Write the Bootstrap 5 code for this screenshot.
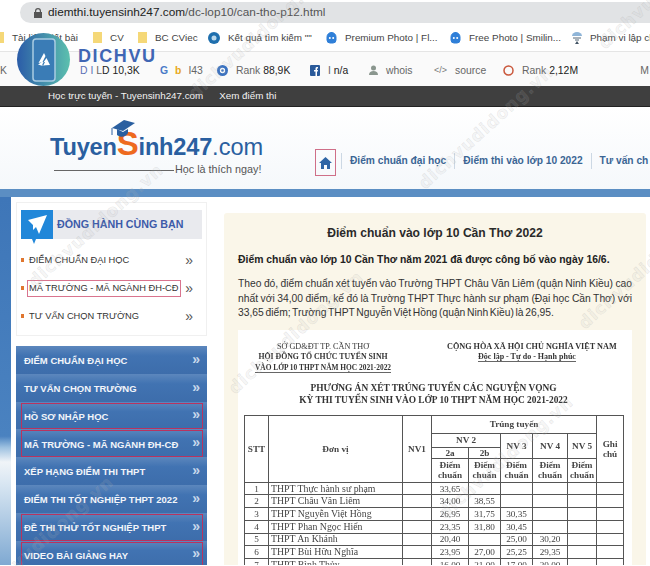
<!DOCTYPE html>
<html lang="vi">
<head>
  <meta charset="UTF-8">
  <title>Điểm chuẩn vào lớp 10 Cần Thơ 2022</title>
  <meta name="viewport" content="width=device-width, initial-scale=1">
  <link href="https://cdn.jsdelivr.net/npm/bootstrap@5.3.0/dist/css/bootstrap.min.css" rel="stylesheet">
  <style>
    html, body { height: 566px; overflow: hidden; }
    body { width: 650px; position: relative; background: #fff; color: #222; font-family: "Liberation Sans", sans-serif; font-size: 11px; }
    .addr-row { height: 24px; padding: 2px 0 1px 20px; }
    .addr-pill { height: 21px; background: #e1e3e5; border-radius: 11px 0 0 11px; padding-left: 14px; gap: 6px; font-size: 11.8px; color: #555; white-space: nowrap; overflow: hidden; }
    .addr-pill b { font-weight: 400; color: #222; }
    .book-row { height: 28px; padding-top: 1px; border-bottom: 1px solid #e5e5e5; font-size: 9.9px; color: #444; white-space: nowrap; overflow: hidden; }
    .bm { flex: none; display: flex; align-items: center; gap: 8px; }
    .fold { width: 9px; height: 11px; background: #f5d878; display: block; flex: none; }
    .ext-row { height: 34px; padding-top: 3px; background: #fafafa; font-size: 10.4px; color: #666; white-space: nowrap; overflow: hidden; }
    .ext-row b { font-weight: 400; color: #222; }
    .ext { flex: none; display: flex; align-items: center; gap: 8px; }
    .dark-bar { height: 21px; background: #3f3f3f; color: #f2f2f2; font-size: 9.8px; padding-left: 48px; gap: 16px; border-bottom: 1px solid #222; }
    .site-head { height: 82px; background: linear-gradient(#fff, #f5f8fb); overflow: hidden; }
    .logo-box { width: 265px; margin-left: 50px; padding-top: 27px; flex: none; position: relative; }
    .logo-txt { font-size: 23.6px; line-height: 27px; font-weight: 700; color: #2a5fa0; letter-spacing: -.2px; white-space: nowrap; }
    .logo-txt i { font-style: normal; color: #ee6a1f; font-size: 33px; line-height: 20px; }
    .logo-txt em { font-style: normal; font-weight: 400; color: #2a5fa0; letter-spacing: 0; }
    .logo-cap { position: absolute; left: 60px; top: 13px; width: 25px; height: 19px; }
    .logo-sub { width: 212px; height: 13px; margin-top: 2px; gap: 1px; font-size: 10.8px; color: #555; white-space: nowrap; }
    .logo-sub hr { width: 120px; margin: 2px 0 0 4px; border: 0; border-top: 1px solid #666; opacity: 1; }
    .top-menu { padding-top: 42px; font-size: 10.2px; font-weight: 700; color: #3b6594; white-space: nowrap; }
    .home-box { width: 21px; height: 27px; border: 1px solid #cf6f88; margin-right: 5px; }
    .top-link { padding: 0 8px; height: 16px; line-height: 16px; border-left: 1px solid #ccd8e4; }
    .blue-strip { height: 8px; background: #5b8ec3; }
    .page-wrap { height: 368px; background: #f6f8f9; overflow: hidden; }
    .sky-side { width: 11px; flex: none; background: linear-gradient(#3e76b8 0, #4a82c0 65%, #9cc0e0 68%, #f0f4f8 72%, #d8e6f2 78%, #7fa9d2 100%); }
    .side-col { width: 196px; flex: none; padding: 5px 0 0 5px; background: #fff; }
    .box-one { width: 191px; height: 134px; background: #fff; border: 1px solid #f0f0f0; padding: 7px 4px 0 4px; }
    .box-head { height: 29px; width: 181px; background: #e9eaee; font-size: 10.7px; font-weight: 700; color: #3d5ba9; gap: 4px; white-space: nowrap; }
    .box-ico { width: 32px; height: 34px; flex: none; align-self: flex-start; }
    .one-row { height: 28px; padding-right: 9px; font-size: 9.3px; color: #333; white-space: nowrap; }
    .one-list { padding-top: 7px; }
    .dot-o { width: 3px; height: 4px; background: #e0762f; margin-right: 3px; flex: none; }
    .one-txt { padding: 0 1px; line-height: 15px; border: 1px solid transparent; }
    .one-txt.hot { border-color: #d9748e; }
    .arr { font-size: 14px; line-height: 1; color: #555; }
    .menu-list { width: 191px; margin-top: 10px; border-radius: 0; }
    .menu-list .list-group-item { height: 27.8px; padding: 3px 8px 0; background: linear-gradient(#5c87bd 0, #4173b2 35%, #3d6dab 100%); border: 0; border-radius: 0; color: #f2f5fa; font-size: 9.5px; font-weight: 700; white-space: nowrap; }
    .menu-list .arr { color: #c8d8ec; margin-right: -1px; margin-top: -5px; }
    .mark-red { position: absolute; left: 5px; right: 4px; top: 1px; bottom: 0; border: 1px solid #b9335f; pointer-events: none; }
    .art-wrap { flex: 1; background: #fff; padding: 16px 4px 0 17px; min-width: 0; }
    .art-box { height: 352px; background: #faf6e9; padding: 10px 14px 0 14px; overflow: hidden; border-radius: 3px 3px 0 0; }
    .art-title { font-size: 12.1px; font-weight: 700; color: #2a2a2a; text-align: center; margin: 0 0 9px; line-height: 20px; }
    .art-lead { font-size: 10.4px; font-weight: 700; color: #222; margin: 0 0 10px; line-height: 15px; white-space: nowrap; }
    .art-text { font-size: 10.3px; word-spacing: -1.2px; color: #333; margin: 0 0 9px; line-height: 14.6px; text-align: justify; }
    .scan { height: 240px; background: #fff; padding: 0 9px 0 6px; font-family: "Liberation Serif", serif; color: #333; filter: blur(.35px); overflow: hidden; }
    .scan-top { height: 52px; padding-top: 12px; font-size: 8.2px; line-height: 10.5px; font-weight: 700; text-align: center; white-space: nowrap; }
    .scan-l { width: 142px; margin-left: 8px; }
    .scan-r { width: 160px; margin-right: 16px; }
    .scan-l u, .scan-r u { text-decoration: none; border-bottom: 1px solid #666; }
    .scan-title { font-size: 9.4px; line-height: 12px; font-weight: 700; text-align: center; padding: 0 0 9px; white-space: nowrap; }
    .scan-tb { width: 379px; table-layout: fixed; border-collapse: collapse; margin: 0; color: #333; }
    .scan-tb > :not(caption) > * > * { padding: 0; border: 1px solid #555; background: transparent; color: #444; font-size: 9.2px; line-height: 10px; text-align: center; vertical-align: middle; box-shadow: none; white-space: nowrap; overflow: hidden; }
    .scan-tb thead th { font-weight: 700; }
    .scan-tb .sch { text-align: left; padding-left: 2px; font-size: 9.8px; }
    .scan-tb tbody tr { height: 12.7px; }
    .wm { position: absolute; font-family: "DejaVu Sans", sans-serif; font-weight: 700; font-size: 17px; letter-spacing: 1px; color: rgba(190, 190, 190, .13); -webkit-text-stroke: .5px rgba(160, 160, 160, .24); transform: rotate(-42deg); transform-origin: left bottom; white-space: nowrap; pointer-events: none; }
    .dv-logo { position: absolute; left: 17px; top: 33px; gap: 8px; }
    .dv-circle { width: 53px; height: 53px; border-radius: 50%; background: linear-gradient(90deg, #2b5ca8, #5cc0ae); flex: none; }
    .dv-name { font-size: 18px; font-weight: 700; color: #3f66b4; letter-spacing: 1.6px; line-height: 1; margin-top: -7px; }
  </style>
</head>
<body>
  <div class="addr-row d-flex align-items-center">
    <div class="addr-pill d-flex align-items-center flex-grow-1">
      <svg width="8" height="10" viewBox="0 0 8 10"><path d="M1 4V3a3 3 0 0 1 6 0v1h1v6H0V4zm1.2 0h3.6V3a1.8 1.8 0 0 0-3.6 0z" fill="#555"/></svg>
      <span><b>diemthi.tuyensinh247.com</b>/dc-lop10/can-tho-p12.html</span>
    </div>
  </div>

  <div class="book-row d-flex align-items-center">
    <div class="bm" style="width:93px"><span class="fold" style="width:4px"></span><span>Tài liệu viết bài</span></div>
    <div class="bm" style="width:45px"><span class="fold"></span><span>CV</span></div>
    <div class="bm" style="width:70px"><span class="fold"></span><span>BC CViec</span></div>
    <div class="bm" style="width:118px"><svg width="12" height="12" viewBox="0 0 12 12"><circle cx="6" cy="6" r="6" fill="#1f6fae"/><circle cx="6" cy="6" r="2.5" fill="#bcd9ec"/></svg><span>Kết quả tìm kiếm ""</span></div>
    <div class="bm" style="width:124px"><svg width="11" height="12" viewBox="0 0 11 12"><path d="M5.5 0v2M1 5a4.500 4.500 0 0 1 9 0v3a3 3 0 0 1-3 3H4a3 3 0 0 1-3-3z" fill="#2f7fd8" stroke="#2f7fd8"/><circle cx="3.800" cy="6" r="1" fill="#fff"/><circle cx="7.200" cy="6" r="1" fill="#fff"/></svg><span>Premium Photo | Fl...</span></div>
    <div class="bm" style="width:122px"><svg width="11" height="12" viewBox="0 0 11 12"><path d="M5.5 0v2M1 5a4.500 4.500 0 0 1 9 0v3a3 3 0 0 1-3 3H4a3 3 0 0 1-3-3z" fill="#2f7fd8" stroke="#2f7fd8"/><circle cx="3.800" cy="6" r="1" fill="#fff"/><circle cx="7.200" cy="6" r="1" fill="#fff"/></svg><span>Free Photo | Smilin...</span></div>
    <div class="bm"><svg width="10" height="12" viewBox="0 0 10 12"><path d="M0 4a5 4 0 0 1 10 0z" fill="#8fb5d8"/><path d="M1 6h8M3 8h4" stroke="#567" /><path d="M5 9l2 3H3z" fill="#456"/></svg><span>Phạm vi lập ch</span></div>
  </div>

  <div class="ext-row d-flex align-items-center">
    <div class="ext" style="width:80px"><span>K</span></div>
    <div class="ext" style="width:80px;gap:3px"><span style="color:#5a6fb5">D I</span><span>L<b>D 10,3K</b></span></div>
    <div class="ext" style="width:57px;gap:7px"><span style="color:#4a7ac8;font-weight:700">G</span><span style="color:#e8a820;font-weight:700">b</span><span>I43</span></div>
    <div class="ext" style="width:93px"><svg width="11" height="11" viewBox="0 0 11 11"><circle cx="5.500" cy="5.500" r="5.500" fill="#3a72c0"/><circle cx="5.500" cy="5.500" r="2" fill="none" stroke="#fff" stroke-width="1.300"/></svg><span>Rank <b>88,9K</b></span></div>
    <div class="ext" style="width:59px"><svg width="10" height="11" viewBox="0 0 10 11"><rect width="10" height="11" rx="1" fill="#2a5a9a"/><path d="M5.500 11V6.500H4V5h1.500V3.500C5.500 2.300 6.200 2 8 2v1.500C7 3.500 7 3.600 7 4.200V5h1l-.2 1.500H7V11z" fill="#fff"/></svg><span>I <b>n/a</b></span></div>
    <div class="ext" style="width:65px"><svg width="9" height="10" viewBox="0 0 9 10"><circle cx="4.500" cy="3" r="2.500" fill="#8a968e"/><path d="M0 10c0-3 2-4 4.500-4S9 7 9 10z" fill="#8a968e"/></svg><span>whois</span></div>
    <div class="ext" style="width:69px"><span style="font-size:9px;color:#777">&lt;/&gt;</span><span>source</span></div>
    <div class="ext"><svg width="11" height="11" viewBox="0 0 11 11"><circle cx="5.500" cy="5.500" r="4.500" fill="none" stroke="#c9563a" stroke-width="1.500"/></svg><span>Rank <b>2,12M</b></span></div>
    <span class="ms-auto" style="margin-right:1px">M</span>
  </div>

  <div class="dark-bar d-flex align-items-center">
    <span>Học trực tuyến - Tuyensinh247.com</span>
    <span>Xem điểm thi</span>
  </div>

  <header class="site-head d-flex">
    <div class="logo-box">
      <svg class="logo-cap" viewBox="0 0 25 19"><path d="M2 8L14 0l11 3-12 8z" fill="#2a5fa0"/><path d="M7 9v6c4 3 9 2 11-2V9l-5 3z" fill="#2a5fa0"/><path d="M2 8v7" stroke="#2a5fa0"/></svg>
      <div class="logo-txt">Tuyen<i>S</i>inh247<em>.com</em></div>
      <div class="logo-sub d-flex align-items-center"><hr><span>Học là thích ngay!</span></div>
    </div>
    <nav class="top-menu d-flex align-items-start">
      <div class="home-box d-flex align-items-center justify-content-center">
        <svg width="13" height="12" viewBox="0 0 13 12"><path d="M6.500 0L13 6h-2v6H8V8H5v4H2V6H0z" fill="#2f65a5"/></svg>
      </div>
      <span class="top-link mt-1">Điểm chuẩn đại học</span>
      <span class="top-link mt-1">Điểm thi vào lớp 10 2022</span>
      <span class="top-link mt-1">Tư vấn ch</span>
    </nav>
  </header>
  <div class="blue-strip"></div>

  <div class="page-wrap d-flex">
    <div class="sky-side"></div>
    <aside class="side-col">
      <div class="box-one">
        <div class="box-head d-flex align-items-center">
          <svg class="box-ico" viewBox="0 0 32 34"><path d="M0 0h32v29H15l-2 5-2-5H0z" fill="#2187d9"/><path d="M7 10l19-5-8 19-3-7-3 3v-5z" fill="#fff"/></svg>
          <span>ĐỒNG HÀNH CÙNG BẠN</span>
        </div>
        <ul class="one-list list-unstyled m-0">
          <li class="one-row d-flex align-items-center"><span class="dot-o"></span><span class="one-txt">ĐIỂM CHUẨN ĐẠI HỌC</span><span class="arr ms-auto">»</span></li>
          <li class="one-row d-flex align-items-center"><span class="dot-o"></span><span class="one-txt hot">MÃ TRƯỜNG - MÃ NGÀNH ĐH-CĐ</span><span class="arr ms-auto">»</span></li>
          <li class="one-row d-flex align-items-center"><span class="dot-o"></span><span class="one-txt">TƯ VẤN CHỌN TRƯỜNG</span><span class="arr ms-auto">»</span></li>
        </ul>
      </div>
      <div class="menu-list list-group">
        <a class="list-group-item d-flex align-items-center justify-content-between">ĐIỂM CHUẨN ĐẠI HỌC<span class="arr">»</span></a>
        <a class="list-group-item d-flex align-items-center justify-content-between">TƯ VẤN CHỌN TRƯỜNG<span class="arr">»</span></a>
        <a class="list-group-item d-flex align-items-center justify-content-between">HỒ SƠ NHẬP HỌC<span class="arr">»</span><span class="mark-red"></span></a>
        <a class="list-group-item d-flex align-items-center justify-content-between">MÃ TRƯỜNG - MÃ NGÀNH ĐH-CĐ<span class="arr">»</span><span class="mark-red"></span></a>
        <a class="list-group-item d-flex align-items-center justify-content-between">XẾP HẠNG ĐIỂM THI THPT<span class="arr">»</span></a>
        <a class="list-group-item d-flex align-items-center justify-content-between">ĐIỂM THI TỐT NGHIỆP THPT 2022<span class="arr">»</span></a>
        <a class="list-group-item d-flex align-items-center justify-content-between">ĐỀ THI THỬ TỐT NGHIỆP THPT<span class="arr">»</span><span class="mark-red"></span></a>
        <a class="list-group-item d-flex align-items-center justify-content-between">VIDEO BÀI GIẢNG HAY<span class="arr">»</span><span class="mark-red"></span></a>
      </div>
    </aside>

    <main class="art-wrap">
      <article class="art-box">
        <h1 class="art-title">Điểm chuẩn vào lớp 10 Cần Thơ 2022</h1>
        <p class="art-lead">Điểm chuẩn vào lớp 10 Cần Thơ năm 2021 đã được công bố vào ngày 16/6.</p>
        <p class="art-text">Theo đó, điểm chuẩn xét tuyển vào Trường THPT Châu Văn Liêm (quận Ninh Kiều) cao nhất với 34,00 điểm, kế đó là Trường THPT Thực hành sư phạm (Đại học Cần Thơ) với 33,65 điểm; Trường THPT Nguyễn Việt Hồng (quận Ninh Kiều) là 26,95.</p>
        <div class="scan">
          <div class="scan-top d-flex justify-content-between">
            <div class="scan-l"><span style="font-weight:400">SỞ GD&amp;ĐT TP. CẦN THƠ</span><br><span style="font-size:7.800px">HỘI ĐỒNG TỔ CHỨC TUYỂN SINH</span><br><span style="font-size:7.400px"><u>VÀO LỚP 10 THPT NĂM HỌC 2021-2022</u></span></div>
            <div class="scan-r">CỘNG HÒA XÃ HỘI CHỦ NGHĨA VIỆT NAM<br><u style="font-size:8px">Độc lập - Tự do - Hạnh phúc</u></div>
          </div>
          <div class="scan-title">PHƯƠNG ÁN XÉT TRÚNG TUYỂN CÁC NGUYỆN VỌNG<br>KỲ THI TUYỂN SINH VÀO LỚP 10 THPT NĂM HỌC 2021-2022</div>
          <table class="table table-bordered scan-tb">
            <colgroup><col style="width:24px"><col style="width:134px"><col style="width:29px"><col style="width:37px"><col style="width:32px"><col style="width:32px"><col style="width:35px"><col style="width:29px"><col style="width:27px"></colgroup>
            <thead>
              <tr style="height:18px"><th rowspan="4">STT</th><th rowspan="4">Đơn vị</th><th rowspan="4">NV1</th><th colspan="5">Trúng tuyển</th><th rowspan="4">Ghi<br>chú</th></tr>
              <tr style="height:14px"><th colspan="2">NV 2</th><th rowspan="2">NV 3</th><th rowspan="2">NV 4</th><th rowspan="2">NV 5</th></tr>
              <tr style="height:10px"><th>2a</th><th>2b</th></tr>
              <tr style="height:24px"><th>Điểm<br>chuẩn</th><th>Điểm<br>chuẩn</th><th>Điểm<br>chuẩn</th><th>Điểm<br>chuẩn</th><th>Điểm<br>chuẩn</th></tr>
            </thead>
            <tbody>
              <tr><td>1</td><td class="sch">THPT Thực hành sư phạm</td><td></td><td>33,65</td><td></td><td></td><td></td><td></td><td></td></tr>
              <tr><td>2</td><td class="sch">THPT Châu Văn Liêm</td><td></td><td>34,00</td><td>38,55</td><td></td><td></td><td></td><td></td></tr>
              <tr><td>3</td><td class="sch">THPT Nguyễn Việt Hồng</td><td></td><td>26,95</td><td>31,75</td><td>30,35</td><td></td><td></td><td></td></tr>
              <tr><td>4</td><td class="sch">THPT Phan Ngọc Hiển</td><td></td><td>23,35</td><td>31,80</td><td>30,45</td><td></td><td></td><td></td></tr>
              <tr><td>5</td><td class="sch">THPT An Khánh</td><td></td><td>20,40</td><td></td><td>25,00</td><td>30,20</td><td></td><td></td></tr>
              <tr><td>6</td><td class="sch">THPT Bùi Hữu Nghĩa</td><td></td><td>23,95</td><td>27,00</td><td>25,25</td><td>29,35</td><td></td><td></td></tr>
              <tr><td>7</td><td class="sch">THPT Bình Thủy</td><td></td><td>16,00</td><td>21,00</td><td>17,00</td><td>20,00</td><td></td><td></td></tr>
            </tbody>
          </table>
        </div>
      </article>
    </main>
  </div>

  <div class="dv-logo d-flex align-items-center">
    <div class="dv-circle d-flex align-items-center justify-content-center">
      <svg width="24" height="44" viewBox="0 0 24 44"><rect x="1" y="1" width="22" height="42" rx="3" fill="#3a7cb6" stroke="#a9cbe2" stroke-width="1.500"/><path d="M12 15l1.500 3-3 6-4 1zM14.500 20l3.500 7-8 .500 1-2.500zM6 26.500l5 1.500 2-4-3 0z" fill="#fff"/></svg>
    </div>
    <div class="dv-name">DICHVU</div>
  </div>

  <span class="wm" style="left:430px;top:170px">dichvudidong.vn</span>
  <span class="wm" style="left:40px;top:268px">dichvudidong.vn</span>
  <span class="wm" style="left:240px;top:375px">dichvudidong.vn</span>
  <span class="wm" style="left:450px;top:500px">dichvudidong.vn</span>
  <span class="wm" style="left:-10px;top:580px">dichvudidong.vn</span>
  <span class="wm" style="left:200px;top:80px">dichvudidong.vn</span>
  <span class="wm" style="left:590px;top:310px">dichvudidong.vn</span>
  <span class="wm" style="left:610px;top:30px">dichvudidong.vn</span>
</body>
</html>
